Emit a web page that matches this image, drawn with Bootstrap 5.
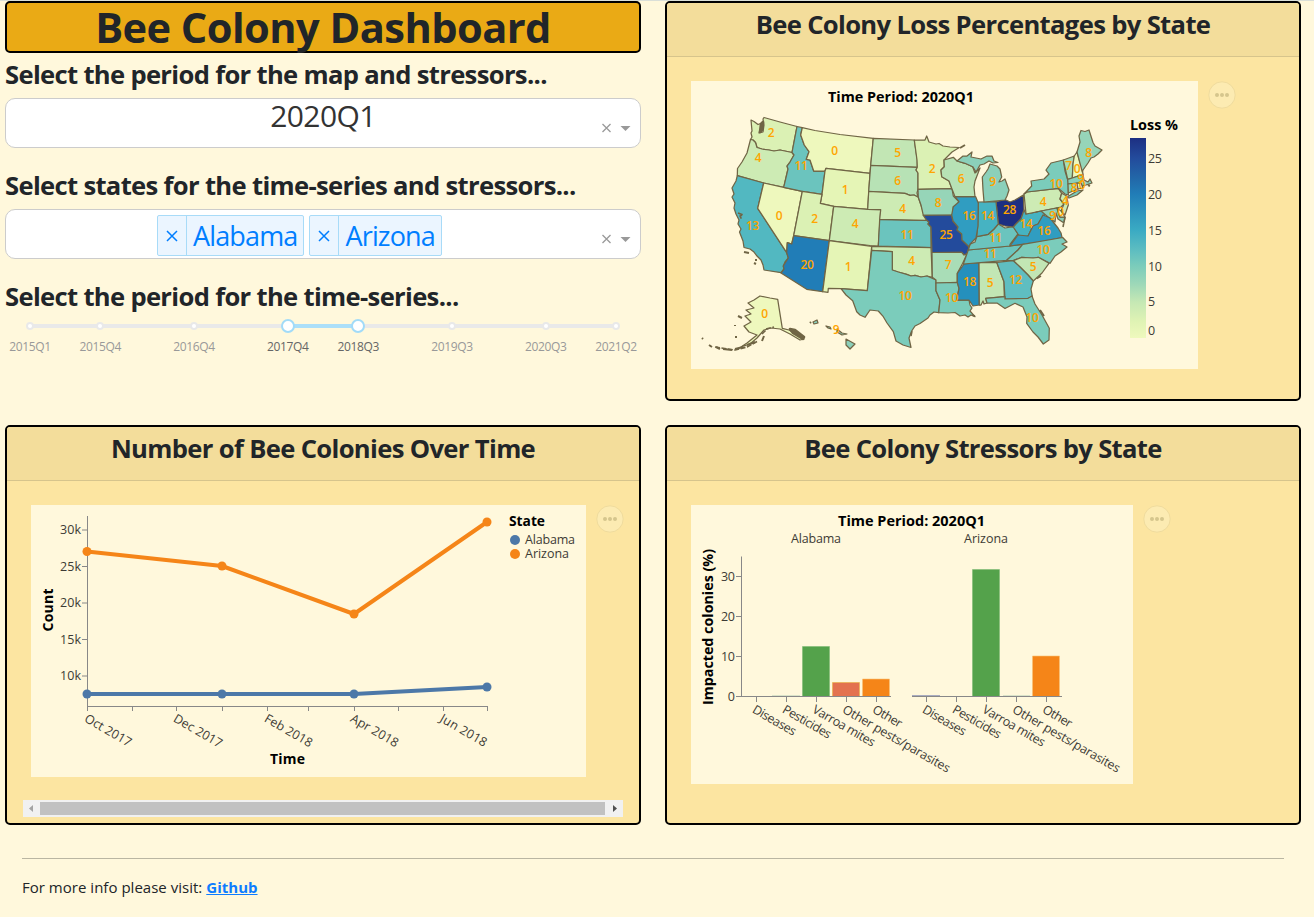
<!DOCTYPE html>
<html lang="en">
<head>
<meta charset="utf-8">
<meta name="viewport" content="width=device-width, initial-scale=1">
<title>Bee Colony Dashboard</title>
<link href="https://cdn.jsdelivr.net/npm/bootstrap@5.3.0/dist/css/bootstrap.min.css" rel="stylesheet">
<style>
  body { background:#fff8dc; font-family:"Open Sans","Noto Sans",sans-serif; color:#212529; border-top:1px solid #dadfd8; overflow:hidden; }
  .board { width:1296px; margin-left:5px; display:grid; grid-template-columns:636px 636px; gap:24px; grid-template-rows:400px 400px; }
  .banner { height:52px; background:#eaaa15; border:2px solid #000; border-radius:5px; }
  .banner h1 { font-size:41.6px; font-weight:700; line-height:48px; letter-spacing:-.55px; white-space:nowrap; margin:0; }
  .prompt { font-size:25.6px; font-weight:700; line-height:32px; white-space:nowrap; margin:0; height:32px; letter-spacing:-.67px; }
  .picker { height:50px; background:#fff; border:1px solid #ccc; border-radius:10px; position:relative; }
  .picker-value { font-size:30px; line-height:34px; color:#333; letter-spacing:-.6px; }
  .picker-tools { position:absolute; right:9px; top:22px; }
  .tag { height:41px; border:1px solid #a8dbf8; border-radius:2px; background:#ebf5ff; color:#007eff; font-size:27px; line-height:39px; white-space:nowrap; }
  .tag-x { width:29px; border-right:1px solid #a8dbf8; display:flex; align-items:center; justify-content:center; }
  .tag-name { padding:0 6px; letter-spacing:-.85px; }
  .slider { position:relative; margin:10px 25px 0; height:40px; font-size:12px; color:#999; }
  .rail { position:absolute; left:0; right:0; top:5px; height:4px; background:#e9e9e9; border-radius:4px; }
  .track { position:absolute; top:5px; height:4px; background:#abdff9; }
  .stop { position:absolute; top:3px; width:8px; height:8px; margin-left:-4px; border:2px solid #e9e9e9; border-radius:50%; background:#fff; }
  .knob { position:absolute; top:0; width:14px; height:14px; margin-left:-7px; border:2px solid #a2dbf8; border-radius:50%; background:#fff; }
  .mark-text { position:absolute; top:18px; transform:translateX(-50%); letter-spacing:-.35px; line-height:19px; }
  .mark-text.on { color:#666; }
  .panel { border:2px solid #000; border-radius:5px; background:#fce5a1; }
  .panel .card-header { height:54px; padding:3px 0 0; background:#f3dd9b; border-bottom:1px solid #d6c48c; border-radius:3px 3px 0 0; }
  .panel h2 { font-size:25.6px; font-weight:700; line-height:38px; letter-spacing:-.65px; white-space:nowrap; margin:0; }
  .panel .card-body { padding:24px; gap:10px; }
  .plot { background:#fff8dc; display:block; flex:none; }
  .scrollbar-x { height:17px; margin:0 16px; background:#f1f1f1; padding:2px 0; }
  .scrollbar-x .thumb { background:#c1c1c1; width:565px; height:13px; }
  .foot { margin:33px 29px 0 22px; width:1262px; }
  .foot hr { margin:0; border-color:#8c8a7c; opacity:.6; }
  .foot p { font-size:15px; line-height:24px; margin:16px 0 0; letter-spacing:.02px; }
  .foot a { color:#0d7cff; }
  svg text { font-family:"Open Sans","Noto Sans",sans-serif; }
  .lab { font-size:12.5px; fill:#3d3b35; }
  .ttl { font-size:14px; font-weight:700; fill:#000; }
  .num { font-size:12px; fill:#ffa500; text-anchor:middle; font-weight:600; letter-spacing:-.3px; }
  .axis { stroke:#888; fill:none; }
  .states path { stroke:#706545; stroke-width:1.25; stroke-linejoin:round; }
</style>
</head>
<body>
<main class="board">
  <section>
    <div class="banner text-center"><h1>Bee Colony Dashboard</h1></div>
    <h3 class="prompt" style="margin-top:6px"><span>Select the period for the map and stressors...</span></h3>
    <div class="picker text-center" style="margin-top:7px">
      <div class="picker-value"><span>2020Q1</span></div>
      <svg class="picker-tools" width="30" height="14"><path d="M1.5 3l8 8m0-8l-8 8" stroke="#999" stroke-width="1.3"/><path d="M19.5 5h10l-5 5z" fill="#999"/></svg>
    </div>
    <h3 class="prompt" style="margin-top:22px"><span>Select states for the time-series and stressors...</span></h3>
    <div class="picker d-flex" style="margin-top:7px;padding:5px 0 0 151px;gap:5px">
      <div class="tag d-flex"><span class="tag-x"><svg width="12" height="12"><path d="M1 1l10 10m0-10L1 11" stroke="#007eff" stroke-width="1.5"/></svg></span><span class="tag-name">Alabama</span></div>
      <div class="tag d-flex"><span class="tag-x"><svg width="12" height="12"><path d="M1 1l10 10m0-10L1 11" stroke="#007eff" stroke-width="1.5"/></svg></span><span class="tag-name">Arizona</span></div>
      <svg class="picker-tools" width="30" height="14"><path d="M1.5 3l8 8m0-8l-8 8" stroke="#999" stroke-width="1.3"/><path d="M19.5 5h10l-5 5z" fill="#999"/></svg>
    </div>
    <h3 class="prompt" style="margin-top:22px"><span>Select the period for the time-series...</span></h3>
    <div class="slider" id="slider" style="margin-top:6px"><div class="rail"></div></div>
  </section>

  <section class="card panel">
    <div class="card-header text-center"><h2><span>Bee Colony Loss Percentages by State</span></h2></div>
    <div class="card-body d-flex">
      <svg class="plot" width="507" height="288" viewBox="691 81 507 288">
        <defs><linearGradient id="loss" x1="0" y1="0" x2="0" y2="1">
          <stop offset="0" stop-color="#1d2f82"/><stop offset=".1" stop-color="#234b9c"/><stop offset=".2" stop-color="#2267a8"/><stop offset=".28" stop-color="#217db7"/><stop offset=".46" stop-color="#3aaac3"/><stop offset=".56" stop-color="#5dbdc1"/><stop offset=".64" stop-color="#7bccbb"/><stop offset=".73" stop-color="#9dd8b8"/><stop offset=".82" stop-color="#c5e8b4"/><stop offset=".92" stop-color="#e0f3b4"/><stop offset="1" stop-color="#eff9bd"/></linearGradient></defs>
        <text class="ttl" x="828" y="102" textLength="146" lengthAdjust="spacingAndGlyphs">Time Period: 2020Q1</text>
        <g class="states" id="states"></g>
        <g id="nums"></g>
        <text class="ttl" x="1130" y="130" textLength="48" lengthAdjust="spacingAndGlyphs">Loss %</text>
        <rect x="1130" y="138" width="16" height="200" fill="url(#loss)"/>
        <g class="lab"><text x="1148" y="163" textLength="14">25</text><text x="1148" y="199" textLength="14">20</text><text x="1148" y="235" textLength="14">15</text><text x="1148" y="271" textLength="14">10</text><text x="1148" y="306">5</text><text x="1148" y="335">0</text></g>
      </svg>
      <svg width="28" height="28" class="flex-shrink-0"><circle cx="14" cy="14" r="13.2" fill="#fcebb2" stroke="#efdb9d"/><g fill="#d5c68d"><circle cx="9" cy="14" r="2"/><circle cx="14" cy="14" r="2"/><circle cx="19" cy="14" r="2"/></g></svg>
    </div>
  </section>

  <section class="card panel">
    <div class="card-header text-center"><h2><span>Number of Bee Colonies Over Time</span></h2></div>
    <div class="card-body d-flex pb-0">
      <svg class="plot" width="555" height="272" viewBox="31 505 555 272">
        <path class="axis" d="M87.5 516V706.500M87 706.500H488M82 530H87M82 566.500H87M82 603H87M82 639.500H87M82 676H87M87.500 706v5M132.500 706v5M176.500 706v5M222.500 706v5M267.500 706v5M308.500 706v5M354.500 706v5M398.500 706v5M443.500 706v5M487.500 706v5"/>
        <g class="lab" text-anchor="end"><text x="81" y="534" textLength="21">30k</text><text x="81" y="571" textLength="21">25k</text><text x="81" y="607" textLength="21">20k</text><text x="81" y="644" textLength="21">15k</text><text x="81" y="680" textLength="21">10k</text></g>
        <g class="lab">
          <text transform="translate(83.500 721) rotate(30)" textLength="52">Oct 2017</text>
          <text transform="translate(172.500 721) rotate(30)" textLength="54">Dec 2017</text>
          <text transform="translate(263.500 721) rotate(30)" textLength="53">Feb 2018</text>
          <text transform="translate(349.500 721) rotate(30)" textLength="53">Apr 2018</text>
          <text transform="translate(439 721) rotate(30)" textLength="52">Jun 2018</text>
        </g>
        <g fill="none" stroke-width="4" stroke-linejoin="round"><path stroke="#4c78a8" d="M87 694H354L487 687"/><path stroke="#f58518" d="M87 551.500L222 566L354 614L487 522"/></g>
        <g fill="#4c78a8"><circle cx="87" cy="694" r="4.500"/><circle cx="222" cy="694" r="4.500"/><circle cx="354" cy="694" r="4.500"/><circle cx="487" cy="687" r="4.500"/><circle cx="515" cy="540" r="5"/></g>
        <g fill="#f58518"><circle cx="87" cy="551.500" r="4.500"/><circle cx="222" cy="566" r="4.500"/><circle cx="354" cy="614" r="4.500"/><circle cx="487" cy="522" r="4.500"/><circle cx="515" cy="554" r="5"/></g>
        <text class="ttl" transform="translate(52.500 631.500) rotate(-90)" textLength="43">Count</text>
        <text class="ttl" x="270" y="764" textLength="35">Time</text>
        <text class="ttl" x="509" y="526" textLength="36" lengthAdjust="spacingAndGlyphs">State</text>
        <text class="lab" x="525" y="544" textLength="50">Alabama</text><text class="lab" x="525" y="558" textLength="44">Arizona</text>
      </svg>
      <svg width="28" height="28" class="flex-shrink-0"><circle cx="14" cy="14" r="13.2" fill="#fcebb2" stroke="#efdb9d"/><g fill="#d5c68d"><circle cx="9" cy="14" r="2"/><circle cx="14" cy="14" r="2"/><circle cx="19" cy="14" r="2"/></g></svg>
    </div>
    <div class="scrollbar-x d-flex justify-content-between align-items-center" style="margin-bottom:6px"><svg width="17" height="13"><path d="M10 3v7l-4-3.500z" fill="#a3a3a3"/></svg><div class="thumb"></div><svg width="18" height="13"><path d="M8 3v7l4-3.500z" fill="#505050"/></svg></div>
  </section>

  <section class="card panel">
    <div class="card-header text-center"><h2><span>Bee Colony Stressors by State</span></h2></div>
    <div class="card-body d-flex">
      <svg class="plot" width="442" height="279" viewBox="691 505 442 279">
        <text class="ttl" x="838" y="526" textLength="147" lengthAdjust="spacingAndGlyphs">Time Period: 2020Q1</text>
        <text class="lab" x="791" y="543" textLength="50">Alabama</text><text class="lab" x="964" y="543" textLength="44">Arizona</text>
        <g stroke-width=".6"><path fill="#54a24b" stroke="#7fbb76" d="M802.500 646.500h27v50h-27zM972.500 569.500h27v127h-27z"/><path fill="#e3724f" stroke="#e9b23f" d="M832.500 682.500h27v14h-27z"/><path fill="#f58518" stroke="#f9c377" d="M862.500 679h27v17.500h-27zM1032.500 656h27v40.500h-27z"/></g>
        <path d="M772 695.500h28M1003 695.500h27" stroke="#d9e2c8"/><path d="M912 695.500h28" stroke="#a9acc0"/>
        <path class="axis" d="M741.500 556.500V697M741 696.500H891M912 696.500H1062M736 696.500h5M736 656.500h5M736 616.500h5M736 576.500h5M756.500 696v6M786.500 696v6M816.500 696v6M846.500 696v6M876.500 696v6M926.500 696v6M956.500 696v6M986.500 696v6M1016.500 696v6M1046.500 696v6"/>
        <g class="lab" text-anchor="end"><text x="735" y="701">0</text><text x="735" y="661" textLength="14">10</text><text x="735" y="621" textLength="14">20</text><text x="735" y="581" textLength="14">30</text></g>
        <g class="lab" id="bars-a"></g>
        <text class="ttl" transform="translate(713 705) rotate(-90)" textLength="156" lengthAdjust="spacingAndGlyphs">Impacted colonies (%)</text>
      </svg>
      <svg width="28" height="28" class="flex-shrink-0"><circle cx="14" cy="14" r="13.2" fill="#fcebb2" stroke="#efdb9d"/><g fill="#d5c68d"><circle cx="9" cy="14" r="2"/><circle cx="14" cy="14" r="2"/><circle cx="19" cy="14" r="2"/></g></svg>
    </div>
  </section>
</main>
<footer class="foot"><hr><p><span>For more info please visit: <a href="#" class="fw-bold">Github</a></span></p></footer>
<script src="https://cdn.jsdelivr.net/npm/bootstrap@5.3.0/dist/js/bootstrap.bundle.min.js"></script>
<script>
  // loss percentage -> fill colour
  const shade = {0:'#eef8bd',1:'#e5f5b6',2:'#dbf1b4',4:'#cdebb4',5:'#c2e6b4',6:'#b7e2b5',7:'#a9ddb7',8:'#96d5b8',9:'#8bd0ba',10:'#7bccbb',11:'#6bc4be',12:'#5fbec1',13:'#52b8c1',14:'#46b3c2',16:'#309dc1',18:'#2590bd',20:'#217db7',25:'#234b9c',28:'#1d2f82'};
  // [loss, outline, label x, label y]
  const states = [
    [2,'751,120 754,121.500 758,124.500 762,123 763,127 760,130 759,133 763,132 764,125 763,119 764,117.500 780,122 797,126.500 792,152.500 780,150 774,151 769,150 762,149 757,147.500 755.500,142.500 753,140 750.500,139.500 752,137 751,133 752,131',771,137],
    [4,'750.500,139.500 753,140 755.500,142.500 757,147.500 762,149 769,150 774,151 780,150 792,152.500 794,155 790,162 787,166 788,169 783.700,187.300 763.700,183 737.300,175.700 737.500,168.500 742,162 747,153',758,162],
    [13,'737.300,175.700 763.700,183 757.700,208.300 786.700,252.700 788.300,258 785,262 783.300,266 784,269 781,272.700 764,270 763,265 761,260 757,256 754,252 750,249 744,247.500 743,241 739.500,232 741,229 738,224 739,220 736,214 734,208 735,203 732,197 734,194 732,188 736,181',752.500,230],
    [0,'763.700,183 783.700,187.300 802.300,191.300 793.700,235.700 791.700,244 787.300,242.700 786.700,252.700 757.700,208.300',779,220],
    [11,'797,126.500 802.300,127.700 800.700,135 804.300,145 809,151.700 806.300,159.300 810,160 813.700,171 825,171 822,194.300 802.300,191.300 783.700,187.300 788,169 787,166 790,162 794,155 792,152.500',801,170],
    [0,'802.300,127.700 815,130.500 840,134.500 873.300,138.300 870,173.300 826,168.300 825,171 813.700,171 810,160 806.300,159.300 809,151.700 804.300,145 800.700,135',834.500,154.500],
    [1,'826,168.300 870,173.300 867.700,209.300 833.700,206.300 820.300,203.300 822,194.300 825,171',845,193.500],
    [2,'802.300,191.300 822,194.300 820.300,203.300 833.700,206.300 829.300,240.700 793.700,235.700',814.500,222.500],
    [20,'793.700,235.700 829.300,240.700 822.700,291.700 806.700,289.300 781,273 784,269 783.300,266 788.300,258 786.700,252.700 787.300,242.700 791.700,244',807,268.500],
    [4,'833.700,206.300 867.700,209.300 880.700,209.700 878.300,246 870,245.500 829.300,240.700',855,227.500],
    [1,'829.300,240.700 871.700,246.300 867.300,290.700 841,288.700 828.300,288.300 828,292.300 822.700,291.700',848,270.500],
    [11,'879.700,219.300 926.700,220.300 929,222 928,224 931,227 931,247.700 878.300,246',907,238.500],
    [4,'871.700,246.300 931,247.700 932.300,277.300 927,276 921,277 915,275.300 911,276 906.700,274.300 898.300,272 892.300,270 892.300,251.700 871.700,250.300',911.500,264.500],
    [10,'871.700,250.300 892.300,251.700 892.300,270 898.300,272 906.700,274.300 911,276 915,275.300 921,277 927,276 936,280 936,290.700 940,300 938.700,312.700 934,312 930,315 928,318 920,323.500 915,326 911.700,331 909,338 911,347.500 903,345 896,341 893.300,331.700 887,323 883.300,316.700 878.300,311 870,310 865,317.300 860,315 856.700,311.700 852.700,300.700 846,295 841,288.700 867.300,290.700',905,300],
    [5,'873.300,138.300 914.300,140 917.300,160 917.300,167.300 870.700,165.300',897.500,156.500],
    [6,'870.700,165.300 917.300,167.300 916,170 918,173 918,189.300 917,193 918.300,197.300 914,195 910,195.300 905,193.300 868.700,191.300',897.500,184.500],
    [4,'868.700,191.300 905,193.300 910,195.300 914,195 918.300,197.300 922.700,210 926.700,220.300 879.700,219.300 880.700,209.700 867.700,209.300',902.500,212.500],
    [2,'914.300,140 925,140 926.700,136 929,142 936,144 939,143.500 943,146 950,147 959.300,147.500 952,152 944,160 944.300,166.700 941,170 941.700,176.700 949,181 952,188.700 918,189.300 918,173 916,170 917.300,167.300 917,160',932,172.500],
    [8,'918,189.300 952,188.700 953.300,196 959,201.700 957,205 953.300,206.700 953,213 951.700,215 923.300,215.300 921,205 918.300,197.300',938,206.500],
    [25,'923.300,215.300 951.700,215 953,221 958,227 957,230 961.700,234 962,240 969,246.700 967.300,253.300 964,255 961.700,252.300 932,252.500 931,227 928,224 929,222 926.700,220.300',946,239],
    [7,'932,252.500 961.700,252.300 964,255 967,254 962.700,263.300 957.300,273.300 957.300,282.300 936,283 936,280 932.300,277.300',948,268.500],
    [10,'936,283 957.300,282.300 959,288.300 956.700,300 969,300 970,305 972,308 970,311 975,316.700 971,315 968,317 965,315 960,316 955,312.500 948,313 938.700,312.700 940,300 936,290.700',951.5,302],
    [18,'964,264 979,262.700 979.300,305 973,306 969,300 956.700,300 959,288.300 957.300,282.300 957.300,273.300',969.5,286],
    [5,'979,262.700 996.700,262.300 1004,281.700 1004.300,296.700 985.700,298.300 987,303 984,304 983,301 981,305 979.300,305',990,287],
    [11,'963.300,264 968.300,250 1010,246 1022.700,244.300 1018,250 1006.700,260.300',990,258],
    [11,'968.300,250 970,244.300 975,242 976.700,236.700 988.300,234.300 994,229 998.300,224 1005,228 1013.300,226.700 1018,234 1010,244.500 1010,246',995.500,242],
    [28,'996,201.700 1005,199.500 1010,202 1015,200 1023.300,195 1024,210 1021,219 1016,224 1013.300,227 1005,226 998.300,224',1009.500,214],
    [14,'978.300,202 996,201.700 998.300,224 994,229 988.300,234.300 976.700,236.700 977.500,228',987.500,219.500],
    [16,'955,196.700 975.700,196.700 978.300,203.300 978,226 976,238 970,244.300 969,246.700 962,240 961.700,234 957,230 958,227 953,221 951.700,215 953.300,206.700 959,201.700',969,219.500],
    [6,'944,160 953.300,157.300 957,161 965,163.300 972.700,166.700 975,173 980,168 975,181 974,187 975,196.700 955,196.700 951.700,188.300 949,181 941.700,176.700 941,170 944.300,166.700',961,183],
    [9,'957,161 963,156 967,156 972,152 971,157 981,159 987,156 992,156 994,161 998,162.500 993,163 989,161 984,164 980,165 976,172 972.700,166.700 965,163.300',0,0],
    [9,'990,164 997,166 1000,169 1001.700,177 999,182 1002,181 1005,179 1009,190 1007,196 1005,200 984,202 983,190 982.300,177 986,172 988,169',992.500,186],
    [14,'1024,210 1026,214 1032,213 1041,211 1048,212 1043,216 1038,224 1033,226 1028,236 1021,238 1018,234 1013.300,227 1016,224 1021,219',1026,227.500],
    [4,'1024,194 1027,192 1058.300,188.300 1061.700,193.300 1060,199 1064,204 1061,207 1026,214',1043,206],
    [10,'1024,194 1031.700,186 1031,181 1044,179 1049,174 1046,170 1051,163 1063.300,160 1065,171 1068.300,181.700 1068.300,195 1065,194 1058.300,188.300 1027,192',1056,187.500],
    [7,'1063.300,160 1074.300,156 1073,164 1072.300,178.300 1067.700,179.300',1068.500,169.500],
    [0,'1074.300,156 1077,152 1082.300,170 1083,174 1072.300,178.300 1073,164',1077,173],
    [8,'1077,152 1080,142 1079,136 1081,130.500 1085,131.500 1089,130 1093,142.500 1095,146 1102,150 1098,154 1094,157 1091,158 1088,163 1083,170 1082.300,172',1088.500,156.500],
    [9,'1067.700,179.300 1083,174.500 1084,180 1088,182 1090,179 1092,183 1086,185 1082,186 1081,183 1068,184',1080.500,183],
    [8,'1068,184 1077,183 1078,189 1068.300,193',1074,191.500],
    [0,'1077,183 1081,183 1083,188 1078,189',1082,189],
    [10,'1067,197 1077,191 1083,190 1077,195 1069,198',0,0],
    [4,'1061.700,193.300 1066.700,196 1068.300,205 1065,215 1061,211 1064,204 1060,199',1065,205],
    [9,'1036,212 1057,208 1060,217 1065,217 1064,223 1058,219 1056,213 1055,222 1048,217 1041,211',1052.500,219.500],
    [0,'1057,208 1061,211 1065,217 1060,217',1060.500,215.500],
    [16,'1010,246 1018,235 1028,236 1033,226 1038,224 1043,215 1050,218 1054,223 1058,228 1061,233 1062,237.500 1040,242 1022,244.300',1044,235],
    [10,'1022.700,244.300 1062.700,237.500 1067,242 1062,244 1067,247 1061,252 1055,256 1050,263.300 1038.300,257.300 1033,258 1021.700,257.300 1013.300,260.700 1006.700,260.300 1018,250',1043,253.500],
    [5,'1013.300,260.700 1021.700,257.300 1033,258 1038.300,257.300 1049,263.300 1042,273 1033.300,281 1028,275 1020,267',1033,270.500],
    [12,'996.700,262.300 1013.300,260.700 1020,267 1028,275 1033.300,281 1031,289 1032.300,296.700 1028,298.300 1005,299 1004,281.700',1015.500,283.500],
    [10,'985.700,298.300 1005,296.700 1005,299 1028,298.300 1032,296 1035,304 1042,315 1049.300,328.300 1049,340 1043.300,344 1038,337 1033,332 1026.700,323.300 1027,317 1023,307 1015,303.300 1005,308.500 997,303 987,303',1032,322],
    [0,'748,303 754,300 760,296 770,298 777.700,299.300 782.300,328.300 789,330 804,339 800,340 790,334 780,329 771,328 764,330 757,338 750,344 741,347 747,343 757,335 749,332 744,326 751,322 745,316 751,314 746,310 754,308',764.500,317.500],
    [9,'846,339 855,344 850,349 846,345',0,0],
    [9,'813,322 817,320 818,323 814,324',0,0],
    [9,'826,326 830,327 831,329 828,328',836,334],
    [9,'837,329 842,333 847,334 842,335 837,332',0,0]
  ];
  const NS='http://www.w3.org/2000/svg';
  const add=(p,t,a,s)=>{const e=document.createElementNS(NS,t);for(const k in a)e.setAttribute(k,a[k]);if(s!==undefined)e.textContent=s;p.appendChild(e);};
  const map=document.getElementById('states'), nums=document.getElementById('nums');
  states.forEach(([v,pts,x,y])=>{add(map,'path',{d:'M'+pts+'Z',fill:shade[v]}); if(x) add(nums,'text',{class:'num',x,y},v);});
  // Alaska's island chain, the panhandle, Puget Sound and the small coastal islands
  add(map,'path',{d:'M702 338l1 1M709 345l3 2M716 347l4 2M723 349l9 1M735 349l8-2M747 345l8-3M762 341l2-5M738 316l4 2M735 325v1M736 336v2M744 252l5 1M754 263l2 1M756 259v2M810 323l1-1M960 148l5-3M1088 185l2 1M1040 310l4 6',fill:'none',style:'stroke-width:2'});
  add(map,'path',{d:'M790 329l5 1 9 7-1 2-10-6zM761 124l2-2-1 8-2 2z',fill:'#706545',style:'stroke-width:2.6'});
  add(map,'path',{d:'M766 329l8-2M762 334l5-5M738 213l5 2-3 1 2 4M1065 217l-2 10M1041 276l-5 3M972 315l3 1M911 336l1-5M715 347l20 3 12-3 11-6',fill:'none',style:'stroke-width:1.6;stroke-dasharray:5 1.5'});

  const tags=[['Diseases',48],['Pesticides',54],['Varroa mites',70],['Other pests/parasites',122],['Other',32]];
  const bl=document.getElementById('bars-a');
  [751.5,921.5].forEach(x0=>tags.forEach(([s,w],i)=>add(bl,'text',{transform:`translate(${x0+i*30} 712) rotate(30)`,textLength:w},s)));

  const sl=document.getElementById('slider');
  const stops=[[0,'2015Q1'],[3,'2015Q4'],[7,'2016Q4'],[11,'2017Q4'],[14,'2018Q3'],[18,'2019Q3'],[22,'2020Q3'],[25,'2021Q2']];
  let html='<div class="track" style="left:44%;width:12%"></div>';
  stops.forEach(([n,t])=>{const on=n==11||n==14; html+=`<div class="${on?'knob':'stop'}" style="left:${n*4}%"></div><span class="mark-text ${on?'on':''}" style="left:${n*4}%">${t}</span>`;});
  sl.insertAdjacentHTML('beforeend',html);
</script>
</body>
</html>
